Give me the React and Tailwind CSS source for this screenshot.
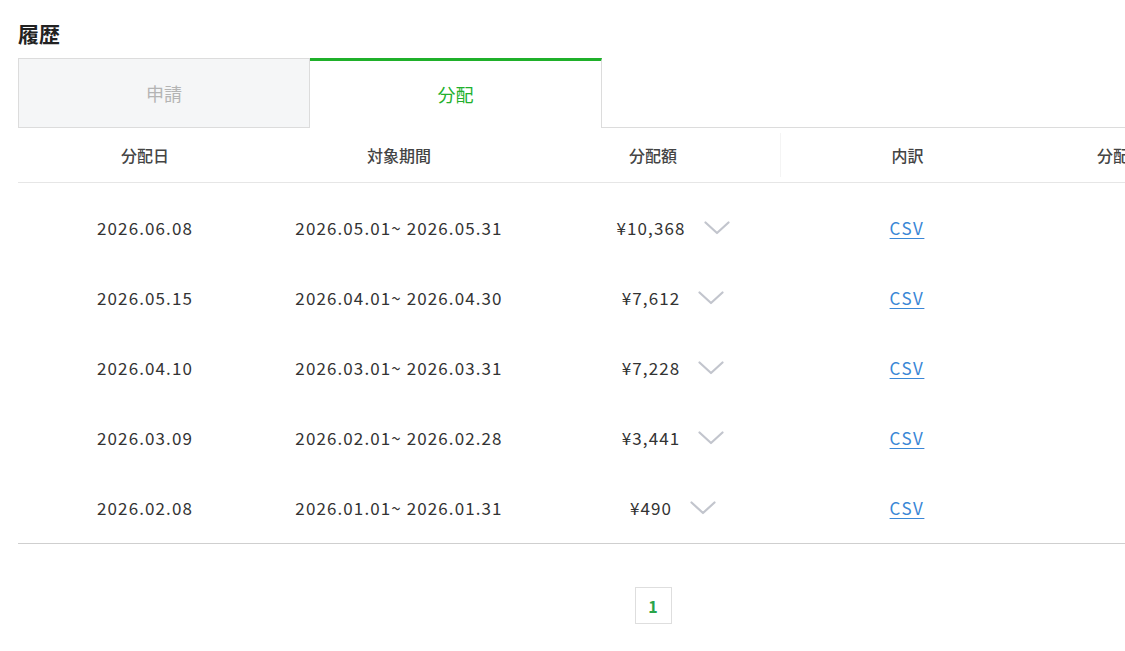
import { useState } from 'react';

const rows = [
  { date: '2026.06.08', period: '2026.05.01~ 2026.05.31', amount: '¥10,368' },
  { date: '2026.05.15', period: '2026.04.01~ 2026.04.30', amount: '¥7,612' },
  { date: '2026.04.10', period: '2026.03.01~ 2026.03.31', amount: '¥7,228' },
  { date: '2026.03.09', period: '2026.02.01~ 2026.02.28', amount: '¥3,441' },
  { date: '2026.02.08', period: '2026.01.01~ 2026.01.31', amount: '¥490' },
];

function Chevron() {
  return (
    <svg width="26" height="14" viewBox="0 0 26 14" fill="none" className="shrink-0">
      <path d="M1.5 1.5 L13 12 L24.5 1.5" stroke="#c2c5cd" strokeWidth="2.2" strokeLinecap="round" strokeLinejoin="round" />
    </svg>
  );
}

function HistoryRow({ row }) {
  return (
    <div className="grid grid-cols-5 h-[70px] items-center text-[17px] tracking-[1.1px] text-[#333]">
      <div className="text-center">{row.date}</div>
      <div className="text-center">{row.period}</div>
      <div className="flex items-center justify-center gap-[18px] pl-[40px]">
        <span>{row.amount}</span>
        <Chevron />
      </div>
      <div className="text-center">
        <a href="#" className="text-[17px] tracking-[1.5px] text-[#3a87d6] underline underline-offset-[3px]">CSV</a>
      </div>
      <div />
    </div>
  );
}

export default function App() {
  const [tab, setTab] = useState('distribution');

  return (
    <div className="w-[1125px] h-[651px] overflow-hidden bg-white" style={{ fontFamily: '"Noto Sans CJK JP", "Noto Sans", sans-serif' }}>
      <div className="w-[1270px] ml-[18px]">
        <h2 className="pt-[18px] text-[21px] font-bold text-[#222] leading-[30px]">履歴</h2>

        <div className="mt-[10px] flex h-[70px]">
          <button
            onClick={() => setTab('application')}
            className="w-[292px] bg-[#f5f6f7] border border-[#dcdcdc] text-[18px] text-[#b4b4b4]"
          >
            申請
          </button>
          <button
            onClick={() => setTab('distribution')}
            className="w-[292px] bg-white border-t-[3px] border-t-[#1fb02a] border-r border-r-[#dcdcdc] text-[18px] text-[#22b02c]"
          >
            分配
          </button>
          <div className="flex-1 border-b border-[#dcdcdc]" />
        </div>

        <div className="grid grid-cols-5 h-[55px] items-center border-b border-[#e6e6e6] text-[16px] font-medium text-[#444]">
          <div className="text-center">分配日</div>
          <div className="text-center">対象期間</div>
          <div className="text-center">分配額</div>
          <div className="text-center h-[44px] flex items-center justify-center border-l border-[#f4f4f4]">内訳</div>
          <div className="pl-[63px] whitespace-nowrap">分配ステータス</div>
        </div>

        <div className="pt-[10px] border-b border-[#cfcfcf]">
          {rows.map((row) => (
            <HistoryRow key={row.date} row={row} />
          ))}
        </div>

        <div className="flex justify-center mt-[43px]">
          <button className="w-[37px] h-[37px] border border-[#dedede] text-[16px] font-bold text-[#2aa44a]">1</button>
        </div>
      </div>
    </div>
  );
}
